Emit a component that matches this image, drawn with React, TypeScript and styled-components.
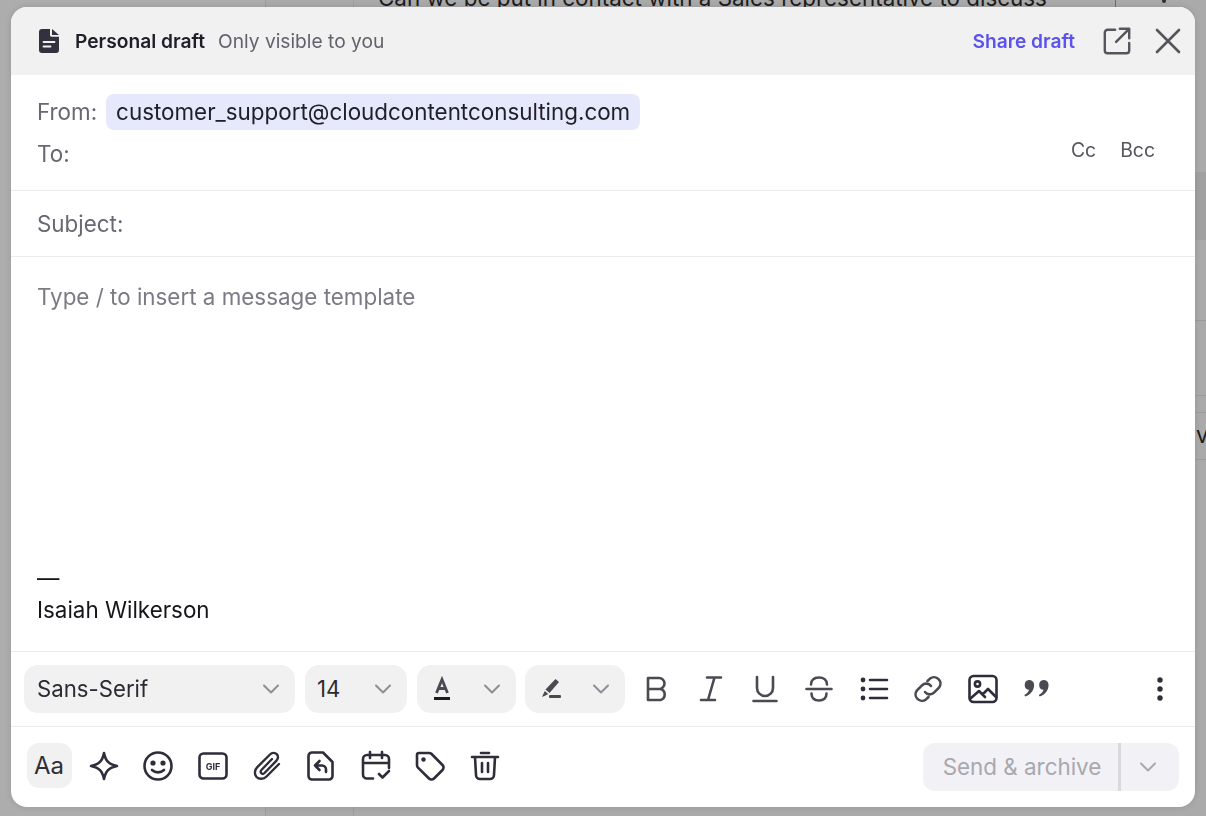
import React from 'react'
import styled, { createGlobalStyle } from 'styled-components'

const Global = createGlobalStyle`
  html, body {
    margin: 0;
    padding: 0;
    height: 100%;
    overflow: hidden;
    background: #a9a9a9;
    font-family: Inter, "Liberation Sans", sans-serif;
    -webkit-font-smoothing: antialiased;
  }
`
const Backdrop = styled.div`
  position: fixed;
  inset: 0;
  display: flex;
  background: #aaaaaa;
  overflow: hidden;
`
const BackSidebar = styled.div`
  width: 265px;
  border-right: 1px solid #9c9c9c;
  background: #adadad;
`
const BackList = styled.div`
  width: 87px;
  border-right: 1px solid #9e9e9e;
`
const BackMain = styled.div`
  flex: 1;
  position: relative;
  padding-left: 24px;
`
const BackText = styled.div`
  margin-top: -16px;
  font-size: 22.4px;
  line-height: 28px;
  color: #1c1c1c;
  white-space: nowrap;
`
const BackBand = styled.div`
  position: absolute;
  right: 0;
  top: 172px;
  width: 20px;
  height: 68px;
  background: #a1a1a1;
`
const BackLine = styled.div<{ $top: number }>`
  position: absolute;
  right: 0;
  top: ${({ $top }) => $top}px;
  width: 20px;
  height: 1px;
  background: #9b9b9b;
`
const BackDivider = styled.div`
  position: absolute;
  left: 761px;
  top: 0;
  width: 1px;
  height: 8px;
  background: #6e6e6e;
`
const BackDot = styled.div`
  position: absolute;
  left: 808px;
  top: 0;
  width: 4px;
  height: 3px;
  border-radius: 0 0 2px 2px;
  background: #333;
`
const BackLetter = styled.div`
  position: absolute;
  left: 842px;
  top: 421px;
  font-size: 22.4px;
  color: #1c1c1c;
`
const Modal = styled.div`
  position: absolute;
  left: 11px;
  top: 7px;
  width: 1184px;
  height: 800px;
  display: flex;
  flex-direction: column;
  background: #fff;
  border-radius: 16px;
  overflow: hidden;
  box-shadow: 0 0 6px rgba(0, 0, 0, 0.12);
`
const Header = styled.div`
  height: 68px;
  flex: none;
  display: flex;
  align-items: center;
  background: #f1f1f1;
  padding: 0 12px 0 26px;
  box-sizing: border-box;
`
const HeaderTitle = styled.span`
  margin-left: 14px;
  font-size: 19.2px;
  font-weight: 600;
  color: #1f1f28;
`
const HeaderNote = styled.span`
  margin-left: 13px;
  font-size: 19.2px;
  color: #62626c;
`
const ShareLink = styled.span`
  margin-left: auto;
  font-size: 19.2px;
  font-weight: 600;
  color: #5b53ec;
`
const HeaderIcon = styled.span<{ $gap: number }>`
  display: flex;
  margin-left: ${({ $gap }) => $gap}px;
`
const AddressBlock = styled.div`
  height: 116px;
  flex: none;
  box-sizing: border-box;
  padding: 19px 40px 0 26px;
  border-bottom: 1px solid #e9e9ee;
  display: flex;
  justify-content: space-between;
`
const AddressRows = styled.div`
  display: flex;
  flex-direction: column;
  gap: 6px;
`
const AddressRow = styled.div`
  display: flex;
  align-items: center;
  height: 36px;
`
const Label = styled.span`
  padding-bottom: 2px;
  font-size: 22.4px;
  color: #686872;
`
const Chip = styled.span`
  margin-left: 9px;
  height: 36px;
  line-height: 36px;
  padding: 0 10px;
  border-radius: 8px;
  background: #e6e8fb;
  font-size: 22.4px;
  color: #1f1f28;
`
const CopyLinks = styled.div`
  display: flex;
  gap: 24px;
  margin-top: 44px;
  font-size: 19.4px;
  line-height: 24px;
  height: 24px;
  color: #55555f;
`
const SubjectRow = styled.div`
  height: 66px;
  flex: none;
  box-sizing: border-box;
  padding: 2px 0 0 26px;
  display: flex;
  align-items: center;
  border-bottom: 1px solid #e9e9ee;
`
const Body = styled.div`
  flex: 1;
  display: flex;
  flex-direction: column;
  padding: 26px 26px 25px;
  font-size: 22.4px;
  line-height: 28px;
`
const Placeholder = styled.div`
  color: #7b7b85;
`
const Signature = styled.div`
  margin-top: auto;
  color: #15151a;
  line-height: 32px;
`
const Toolbar = styled.div`
  height: 76px;
  flex: none;
  box-sizing: border-box;
  display: flex;
  align-items: center;
  padding: 0 13px;
  border-top: 1px solid #e9e9ee;
  border-bottom: 1px solid #e9e9ee;
`
const Select = styled.div<{ $width: number; $gap?: number; $pad?: number }>`
  width: ${({ $width }) => $width}px;
  margin-right: ${({ $gap }) => $gap ?? 10}px;
  height: 48px;
  flex: none;
  box-sizing: border-box;
  display: flex;
  align-items: center;
  justify-content: space-between;
  padding: 0 15px 0 ${({ $pad }) => $pad ?? 13}px;
  border-radius: 14px;
  background: #f1f1f2;
  font-size: 22.2px;
  color: #2b2b33;
`
const SelectText = styled.span`
  padding-bottom: 2px;
`
const ToolIcons = styled.div`
  display: flex;
  align-items: center;
  flex: 1;
  margin-left: 4px;
`
const IconSlot = styled.span`
  width: 54.4px;
  height: 40px;
  flex: none;
  display: flex;
  align-items: center;
  justify-content: center;
`
const MoreSlot = styled(IconSlot)`
  margin-left: auto;
  margin-right: -5px;
`
const Footer = styled.div`
  height: 80px;
  flex: none;
  box-sizing: border-box;
  display: flex;
  align-items: flex-start;
  padding: 16px 16px 0;
`
const FormatToggle = styled.div`
  width: 45px;
  height: 45px;
  flex: none;
  box-sizing: border-box;
  padding-right: 1px;
  display: flex;
  align-items: center;
  justify-content: center;
  border-radius: 12px;
  background: #f1f1f2;
  font-size: 24px;
  color: #2f2d3a;
  margin-right: 5px;
`
const FooterIcons = styled.div`
  display: flex;
  align-items: center;
  height: 45px;
  margin-left: -0.4px;
`
const SendGroup = styled.div`
  margin-left: auto;
  width: 256px;
  height: 48px;
  display: flex;
  align-items: center;
  border-radius: 12px;
  background: #f2f1f6;
`
const SendLabel = styled.span`
  width: 198px;
  text-align: center;
  box-sizing: border-box;
  padding-left: 3px;
  font-size: 22.4px;
  color: #a8a8ae;
  border-right: 3px solid #d9d9dc;
  line-height: 48px;
`
const SendCaret = styled.span`
  flex: 1;
  display: flex;
  justify-content: center;
  padding-right: 4px;
`
const Stroke = styled.svg`
  display: block;
  fill: none;
  stroke-linecap: round;
  stroke-linejoin: round;
`

const ink = '#2f2d3a'
const grey = '#4a4a53'

const Chevron = ({ color = '#8d8d96' }: { color?: string }) => (
  <Stroke width="18" height="12" viewBox="0 0 18 12" stroke={color} strokeWidth="2">
    <path d="M2 2.500l7 7 7-7" />
  </Stroke>
)

const Icon = ({ size = 32, color = grey, width = 2.6, children }: { size?: number; color?: string; width?: number; children: React.ReactNode }) => (
  <Stroke width={size} height={size} viewBox="0 0 32 32" stroke={color} strokeWidth={width}>
    {children}
  </Stroke>
)

const GifText = () => (
  <text x="16" y="19.500" textAnchor="middle" fontSize="9" fontWeight="700" fontFamily="Inter, sans-serif" fill={ink} stroke="none">
    GIF
  </text>
)

export default function App() {
  return (
    <>
      <Global />
      <Backdrop>
        <BackSidebar />
        <BackList />
        <BackMain>
          <BackText>Can we be put in contact with a Sales representative to discuss</BackText>
          <BackDivider />
          <BackDot />
          <BackBand />
          <BackLine $top={320} />
          <BackLine $top={395} />
          <BackLine $top={412} />
          <BackLine $top={459} />
          <BackLetter>v</BackLetter>
        </BackMain>
      </Backdrop>
      <Modal>
        <Header>
          <svg width="24" height="26" viewBox="0 0 24 26" style={{ display: 'block' }}>
            <path fill="#33313e" d="M5 1h8v6c0 1 .8 1.800 1.800 1.800H22V22a3 3 0 0 1-3 3H5a3 3 0 0 1-3-3V4a3 3 0 0 1 3-3z" />
            <path fill="#33313e" d="M15 1l7 6h-7z" />
            <path stroke="#f1f1f1" strokeWidth="1.800" strokeLinecap="round" d="M6.500 14h11M6.500 18.500h7" />
          </svg>
          <HeaderTitle>Personal draft</HeaderTitle>
          <HeaderNote>Only visible to you</HeaderNote>
          <ShareLink>Share draft</ShareLink>
          <HeaderIcon $gap={27}>
            <Icon size={30} width={2.6} color="#55555e">
              <path d="M14 4H6a3 3 0 0 0-3 3v19a3 3 0 0 0 3 3h20a3 3 0 0 0 3-3v-8" />
              <path d="M19 3h10v10M29 3L15 17" />
            </Icon>
          </HeaderIcon>
          <HeaderIcon $gap={19}>
            <Icon size={32} width={2.6} color="#55555e">
              <path d="M6 5l22 22M28 5L6 27" />
            </Icon>
          </HeaderIcon>
        </Header>
        <AddressBlock>
          <AddressRows>
            <AddressRow>
              <Label>From:</Label>
              <Chip>customer_support@cloudcontentconsulting.com</Chip>
            </AddressRow>
            <AddressRow>
              <Label>To:</Label>
            </AddressRow>
          </AddressRows>
          <CopyLinks>
            <span>Cc</span>
            <span>Bcc</span>
          </CopyLinks>
        </AddressBlock>
        <SubjectRow>
          <Label>Subject:</Label>
        </SubjectRow>
        <Body>
          <Placeholder>Type / to insert a message template</Placeholder>
          <Signature>
            <div>—</div>
            <div>Isaiah Wilkerson</div>
          </Signature>
        </Body>
        <Toolbar>
          <Select $width={271}>
            <SelectText>Sans-Serif</SelectText>
            <Chevron />
          </Select>
          <Select $width={102} $pad={12}>
            <SelectText>14</SelectText>
            <Chevron />
          </Select>
          <Select $width={99} $gap={9} $pad={16}>
            <svg width="18" height="26" viewBox="0 0 18 26" style={{ display: 'block' }}>
              <path fill="none" stroke="#4a4a53" strokeWidth="2.800" d="M3.500 17L9 3.500 14.500 17M5.300 12.500h7.400" />
              <rect x="1" y="21" width="16" height="3" fill="#1c1c22" />
            </svg>
            <Chevron />
          </Select>
          <Select $width={100} $gap={0} $pad={15}>
            <svg width="22" height="22" viewBox="0 0 22 22" style={{ display: 'block' }}>
              <path fill="#4a4a53" d="M15.500 1l3.500 3-9.500 11-4-3.500zM4.800 13l3.400 3-2.200 1.300-4 1.700z" />
              <rect x="9" y="17" width="12" height="3" rx="1" fill="#4a4a53" />
            </svg>
            <Chevron />
          </Select>
          <ToolIcons>
            <IconSlot>
              <Icon>
                <path d="M8 5h11a5.500 5.500 0 0 1 0 11H8zM8 16h12.500a5.700 5.700 0 0 1 0 11H8z" />
              </Icon>
            </IconSlot>
            <IconSlot>
              <Icon>
                <path d="M12 4.500h14M6 27h14M19.500 4.500L13 27" />
              </Icon>
            </IconSlot>
            <IconSlot>
              <Icon>
                <path d="M8 4v11a8 8 0 0 0 16 0V4M4.500 28h23" />
              </Icon>
            </IconSlot>
            <IconSlot>
              <Icon>
                <path d="M3.500 16h25M8 11.500C8 7 11.500 4.500 16 4.500s8 2.500 8 7M8.500 20.500C8.500 25 11.500 27.500 16 27.500s7.500-2.500 7.500-7" />
              </Icon>
            </IconSlot>
            <IconSlot>
              <Icon color={ink}>
                <circle cx="5" cy="7" r="2.400" fill={ink} stroke="none" />
                <circle cx="5" cy="16" r="2.400" fill={ink} stroke="none" />
                <circle cx="5" cy="25" r="2.400" fill={ink} stroke="none" />
                <path d="M12 7h17M12 16h17M12 25h17" />
              </Icon>
            </IconSlot>
            <IconSlot>
              <Icon>
                <path d="M13 19a6 6 0 0 0 9 .6l5-5a6.400 6.400 0 0 0-9-9l-2.500 2.400" />
                <path d="M19 13a6 6 0 0 0-9-.6l-5 5a6.400 6.400 0 0 0 9 9l2.500-2.400" />
              </Icon>
            </IconSlot>
            <IconSlot>
              <Icon color={ink}>
                <rect x="2.500" y="3" width="27" height="26" rx="4" />
                <circle cx="10.500" cy="11" r="2.600" />
                <path d="M4 25l8-7 6 6M16 21l5-5 8 8" />
              </Icon>
            </IconSlot>
            <IconSlot>
              <svg width="30" height="26" viewBox="0 0 28 24" style={{ display: 'block' }}>
                <path fill="#4a4a53" d="M6.500 3.500a4.700 4.700 0 0 1 4.800 4.800c0 5-3.200 9-8.300 10.700l-.8-1.500c2.600-1.300 4-3 4.400-4.700a4.700 4.700 0 0 1-.1-9.300zM20 3.500a4.700 4.700 0 0 1 4.800 4.800c0 5-3.200 9-8.300 10.700l-.8-1.500c2.600-1.300 4-3 4.400-4.700a4.700 4.700 0 0 1-.1-9.300z" />
              </svg>
            </IconSlot>
            <MoreSlot>
              <svg width="6" height="24" viewBox="0 0 6 24" style={{ display: 'block' }}>
                <circle cx="3" cy="3" r="2.700" fill={ink} />
                <circle cx="3" cy="12" r="2.700" fill={ink} />
                <circle cx="3" cy="21" r="2.700" fill={ink} />
              </svg>
            </MoreSlot>
          </ToolIcons>
        </Toolbar>
        <Footer>
          <FormatToggle>Aa</FormatToggle>
          <FooterIcons>
            <IconSlot>
              <Icon color={ink}>
                <path d="M16 3c1.500 8 5 11.500 13 13-8 1.500-11.500 5-13 13-1.500-8-5-11.500-13-13 8-1.500 11.500-5 13-13z" />
              </Icon>
            </IconSlot>
            <IconSlot>
              <Icon color={ink}>
                <circle cx="16" cy="16" r="13.500" />
                <circle cx="11" cy="13" r="1.300" fill={ink} />
                <circle cx="21" cy="13" r="1.300" fill={ink} />
                <path d="M10 20c3.500 3.200 8.500 3.200 12 0" />
              </Icon>
            </IconSlot>
            <IconSlot>
              <Icon color={ink}>
                <rect x="2.500" y="3.500" width="27" height="25" rx="4" />
                <GifText />
              </Icon>
            </IconSlot>
            <IconSlot>
              <Icon color={ink} width={2.4}>
                <path transform="translate(2 0)" d="M26 14L13.500 26.500c-3 3-7.500 3-10 .5s-2-7 .8-9.800L17 4.500c2-2 5-2 6.700-.3s1.800 4.500-.2 6.500L11.500 23c-1 1-2.500 1-3.300.2s-.8-2.200.2-3.200L19 9" />
              </Icon>
            </IconSlot>
            <IconSlot>
              <Icon color={ink}>
                <path d="M7 2.500h11l9.500 9.500v14a3.500 3.500 0 0 1-3.500 3.500H7A3.500 3.500 0 0 1 3.500 26V6A3.500 3.500 0 0 1 7 2.500z" />
                <path d="M14.500 11l-4.500 4.500 4.500 4.500M10 15.500h7a4 4 0 0 1 4 4v2.500" />
              </Icon>
            </IconSlot>
            <IconSlot>
              <Icon color={ink}>
                <path d="M13 28.500H7a4 4 0 0 1-4-4V9a4 4 0 0 1 4-4h18a4 4 0 0 1 4 4v9M3 13h26M10 2v6M22 2v6" />
                <path d="M19 24l3.500 3.500L29 21" />
              </Icon>
            </IconSlot>
            <IconSlot>
              <Icon color={ink}>
                <path d="M5 3h10c1 0 2 .4 2.600 1L28.500 15a3.500 3.500 0 0 1 0 5l-8.500 8.500a3.500 3.500 0 0 1-5 0L4 17.600c-.6-.6-1-1.600-1-2.600V5a2 2 0 0 1 2-2z" />
                <circle cx="9.500" cy="9.500" r="1" fill={ink} />
              </Icon>
            </IconSlot>
            <IconSlot>
              <Icon color={ink}>
                <path d="M3 7h26M12 3h8M6 7l1 18a4 4 0 0 0 4 4h10a4 4 0 0 0 4-4l1-18M13 13v9M19 13v9" />
              </Icon>
            </IconSlot>
          </FooterIcons>
          <SendGroup>
            <SendLabel>Send &amp; archive</SendLabel>
            <SendCaret>
              <Chevron color="#a8a8ae" />
            </SendCaret>
          </SendGroup>
        </Footer>
      </Modal>
    </>
  )
}
